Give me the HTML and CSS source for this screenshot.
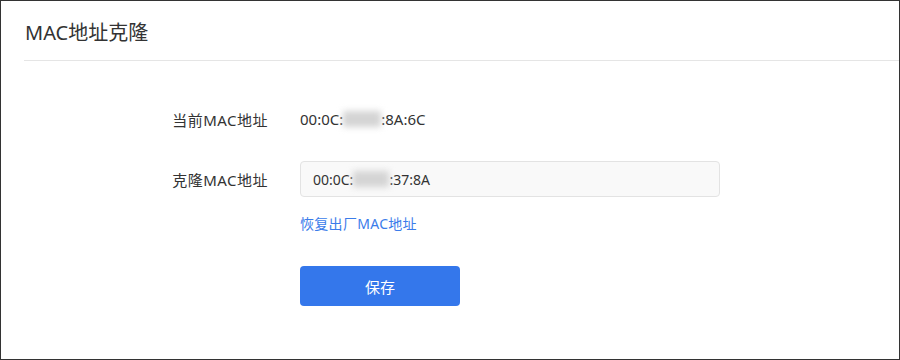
FILE: index.html
```html
<!DOCTYPE html>
<html lang="zh-CN">
<head>
    <meta charset="UTF-8">
    <title>MAC地址克隆</title>
    <link rel="stylesheet" href="styles.css">
</head>
<body>
    <div class="page">
        <div class="header">
            <h1>MAC地址克隆</h1>
        </div>
        <div class="form">
            <div class="form-row">
                <label class="form-label">当前MAC地址</label>
                <div class="form-value">00:0C:<span class="mask"></span>:8A:6C</div>
            </div>
            <div class="form-row row-input">
                <label class="form-label">克隆MAC地址</label>
                <div class="mac-input">00:0C:<span class="mask mask-sm"></span>:37:8A</div>
            </div>
            <div class="form-row row-link">
                <span class="form-label"></span>
                <a href="#" class="link">恢复出厂MAC地址</a>
            </div>
            <div class="form-row row-btn">
                <span class="form-label"></span>
                <button type="button" class="btn">保存</button>
            </div>
        </div>
    </div>
</body>
</html>
```

FILE: styles.css
```css
* {
    margin: 0;
    padding: 0;
    box-sizing: border-box;
    font-family: "Noto Sans", "Noto Sans CJK SC", sans-serif;
}

body {
    background: #fff;
    color: #333;
}

.page {
    width: 900px;
    height: 360px;
    border: 1px solid #333;
    overflow: hidden;
}

.header {
    margin-left: 23px;
    height: 60px;
    border-bottom: 1px solid #e5e5e5;
    display: flex;
    align-items: center;
}

.header h1 {
    font-size: 20px;
    font-weight: normal;
    color: #333;
    padding-left: 1px;
    padding-top: 1px;
}

.form {
    padding-top: 40px;
}

.form-row {
    display: flex;
    align-items: center;
    height: 36px;
}

.form-label {
    width: 299px;
    flex-shrink: 0;
    padding-right: 32px;
    text-align: right;
    font-size: 15px;
    letter-spacing: 0.5px;
    color: #333;
}

.form-value {
    font-size: 15px;
    color: #333;
    display: flex;
    align-items: center;
}

.mask {
    display: inline-block;
    width: 38px;
    height: 16px;
    background: #d4d4d4;
    filter: blur(3px);
}

.mask-sm {
    width: 36px;
}

.row-input {
    margin-top: 24px;
}

.mac-input {
    width: 420px;
    height: 36px;
    background: #f9f9f9;
    border: 1px solid #e3e3e3;
    border-radius: 4px;
    padding-left: 12px;
    font-size: 14px;
    color: #333;
    display: flex;
    align-items: center;
}

.row-link {
    margin-top: 8px;
}

.link {
    color: #3b7cea;
    font-size: 14px;
    letter-spacing: 0.3px;
    text-decoration: none;
}

.row-btn {
    margin-top: 25px;
    height: 40px;
}

.btn {
    width: 160px;
    height: 40px;
    background: #3477eb;
    color: #fff;
    border: none;
    border-radius: 4px;
    font-size: 15px;
    cursor: pointer;
}
```
